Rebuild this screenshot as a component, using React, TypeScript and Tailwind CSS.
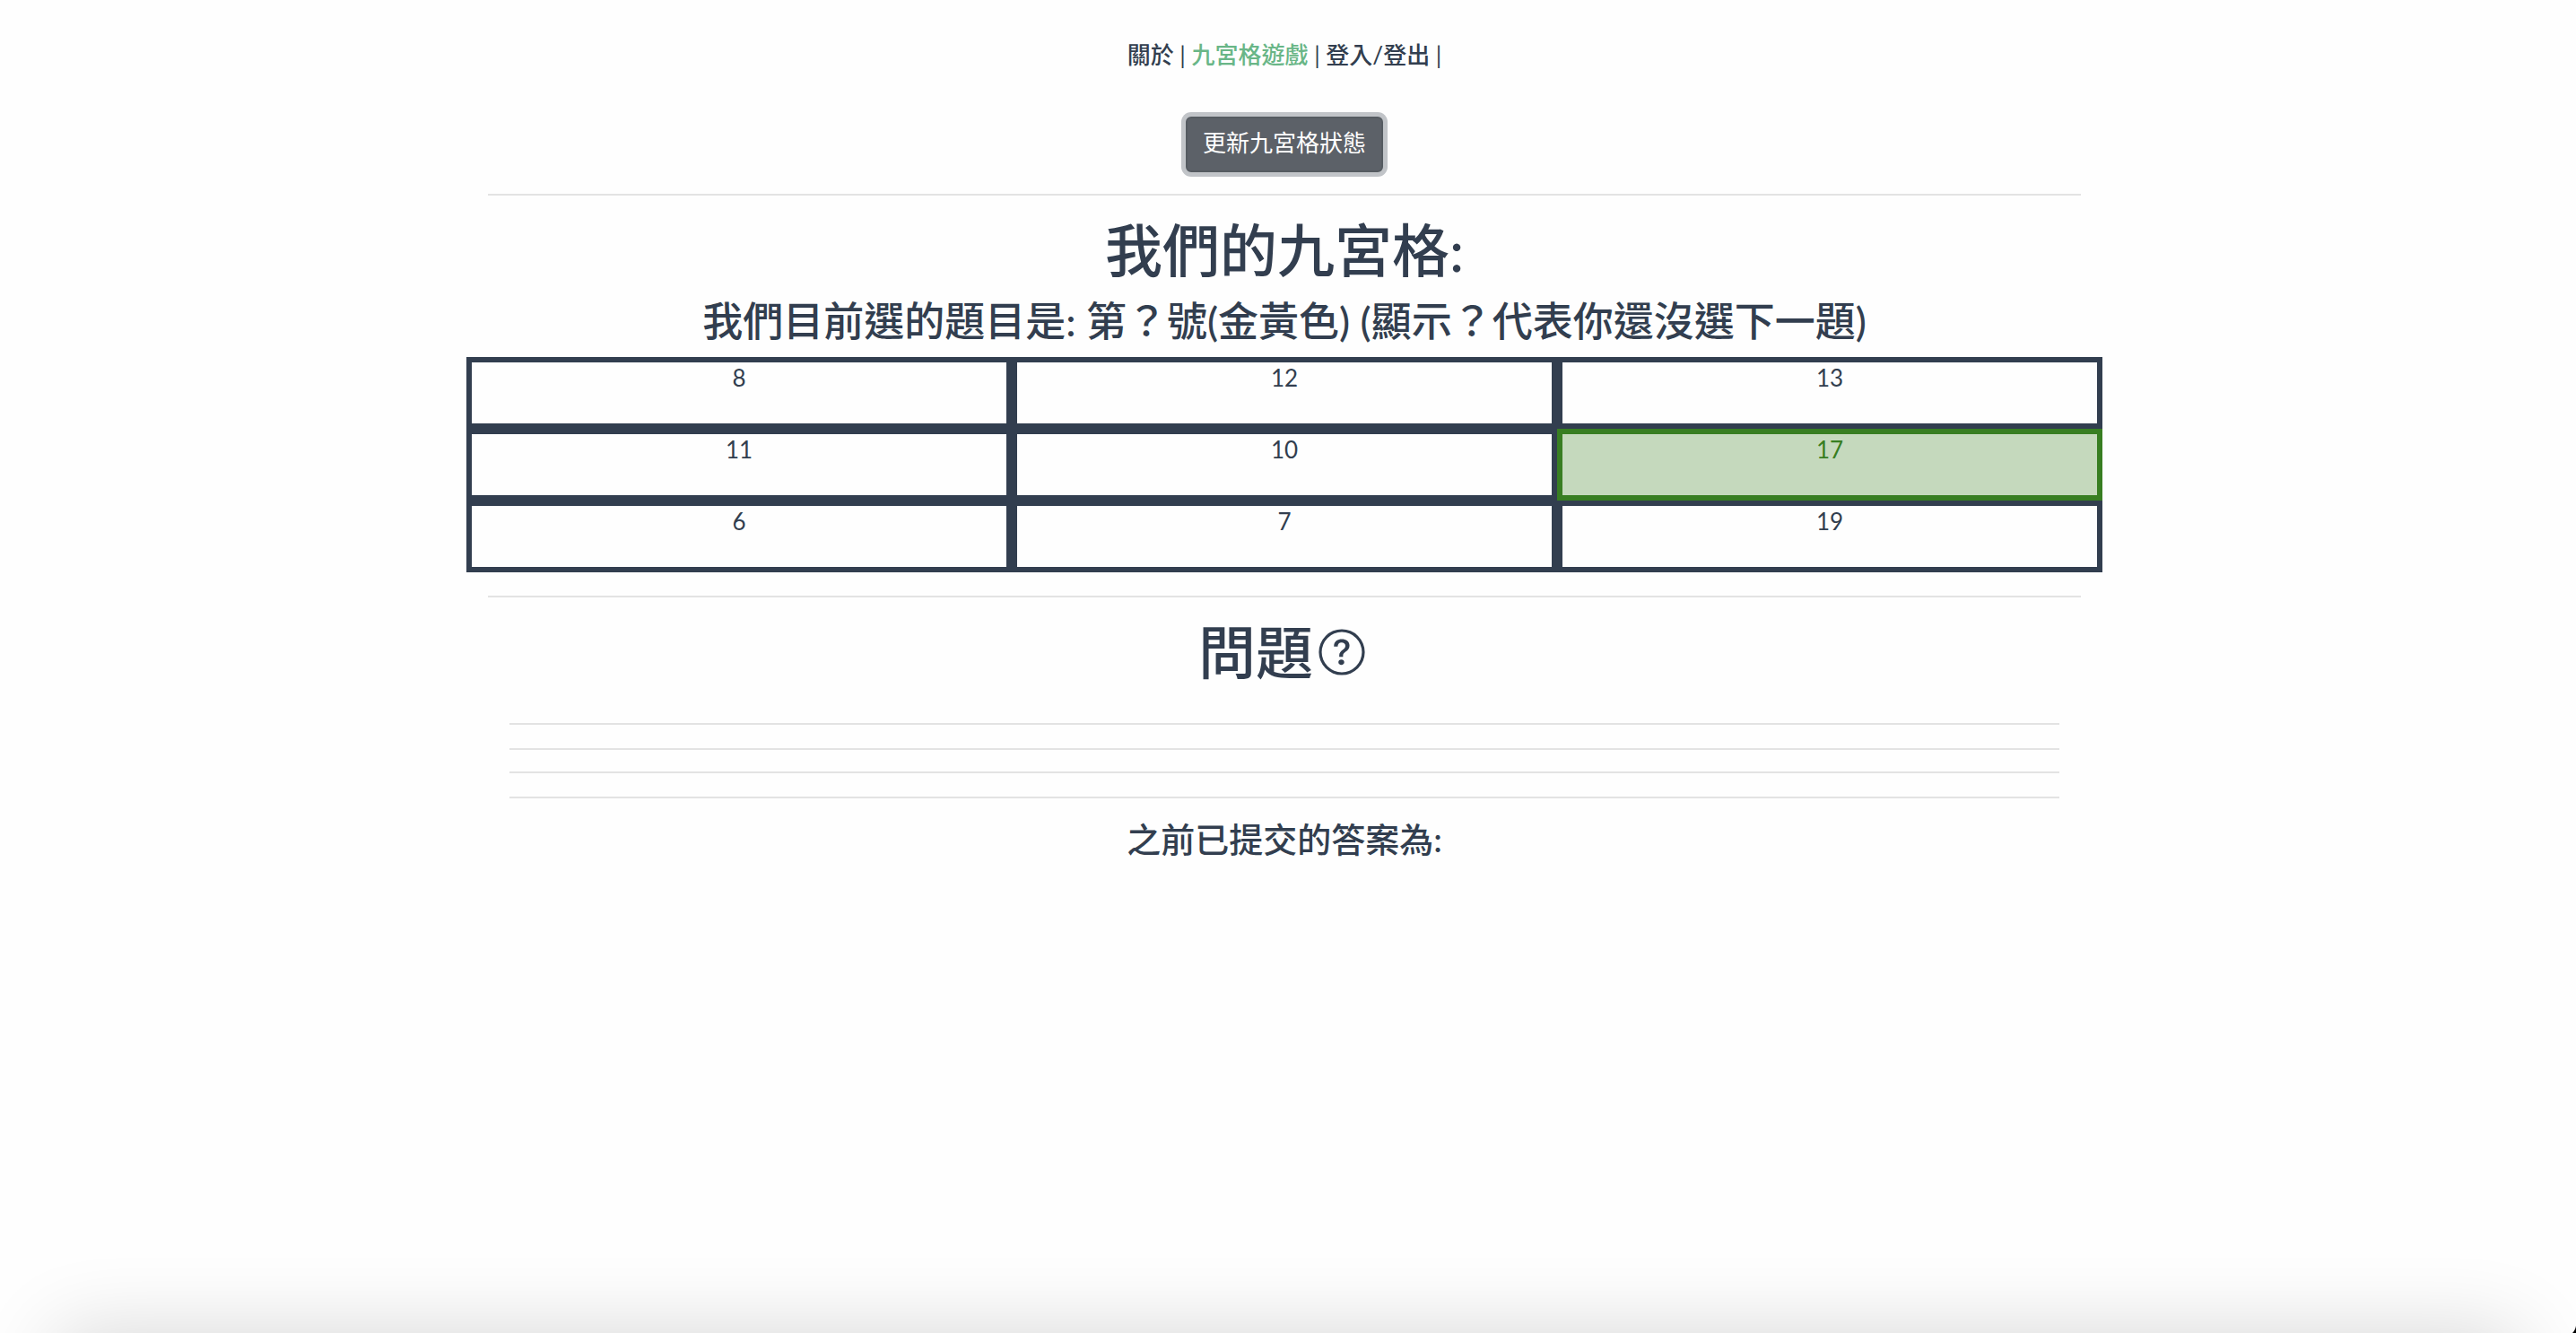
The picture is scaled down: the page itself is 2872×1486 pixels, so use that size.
const rows = [
  [8, 12, 13],
  [11, 10, 17],
  [6, 7, 19],
];

const solved = new Set([17]);

function Divider({ className }: { className: string }) {
  return <hr className={`border-0 h-[2px] bg-[#e3e3e3] ${className}`} />;
}

function QuestionIcon() {
  return (
    <svg viewBox="0 0 20 20" fill="currentColor" className="size-16" aria-hidden="true">
      <path
        fillRule="evenodd"
        d="M10 17a7 7 0 100-14 7 7 0 000 14zm8-7a8 8 0 11-16 0 8 8 0 0116 0z"
      />
      <path d="M7.25 8.033h1.32c0-.781.458-1.384 1.36-1.384.685 0 1.313.343 1.313 1.168 0 .635-.374.927-.965 1.371-.673.489-1.206 1.06-1.168 1.987l.007.463h1.307v-.355c0-.718.273-.927 1.01-1.486.609-.463 1.244-.977 1.244-2.056 0-1.511-1.276-2.241-2.673-2.241-1.326 0-2.786.647-2.754 2.533zm1.562 5.516c0 .533.425.927 1.01.927.609 0 1.028-.394 1.028-.927 0-.552-.42-.94-1.029-.94-.584 0-1.009.388-1.009.94z" />
    </svg>
  );
}

function Grid() {
  return (
    <table className="w-full table-fixed border-separate border-spacing-0">
      <tbody>
        {rows.map((row, i) => (
          <tr key={i}>
            {row.map((n) => (
              <td
                key={n}
                className={
                  solved.has(n)
                    ? "h-20 border-6 border-[#387e22] bg-[#c5d9bd] p-0 align-top leading-[34px] text-[#387e22]"
                    : "h-20 border-6 border-[#323e4f] p-0 align-top leading-[34px]"
                }
              >
                {n}
              </td>
            ))}
          </tr>
        ))}
      </tbody>
    </table>
  );
}

export default function App() {
  return (
    <div
      lang="zh-Hant"
      className="relative min-h-screen bg-[#fefefe] pr-2 text-center font-[Lato,'Noto_Sans_CJK_TC',sans-serif] text-[26px] text-[#323e4f]"
    >
      <nav className="pt-[42px] leading-[38px]">
        <a href="#about" className="font-medium">關於</a> |{" "}
        <a href="#game" className="font-medium text-[#69b687]">九宮格遊戲</a> |{" "}
        <a href="#login" className="font-medium">登入/登出</a> |
      </nav>

      <main className="mx-auto mt-[50px] w-full max-w-[1824px]">
        <button
          type="button"
          className="block mx-auto rounded-md border-2 border-[#555b61] bg-[#5c6168] px-[17px] pt-[7px] pb-[11px] leading-[40px] text-white ring-5 ring-[#c1c4c8]"
        >
          更新九宮格狀態
        </button>
        <Divider className="mx-6 mt-6" />
        <h1 className="mt-[22px] text-[64px] leading-[77px] font-medium">我們的九宮格:</h1>
        <h2 className="mt-[14px] mb-[13px] text-[45px] leading-[54px] font-medium">
          我們目前選的題目是: 第？號(金黃色) (顯示？代表你還沒選下一題)
        </h2>
        <Grid />
        <Divider className="mx-6 mt-[26px]" />

        <section>
          <h1 className="mt-[22px] flex items-center justify-center text-[64px] leading-[77px] font-medium">
            問題
            <QuestionIcon />
          </h1>
          <Divider className="mx-12 mt-[41px]" />
          <Divider className="mx-12 mt-[26px]" />
          <Divider className="mx-12 mt-6" />
          <Divider className="mx-12 mt-[26px]" />
          <h4 className="mt-[22px] text-[38px] leading-[46px] font-medium">之前已提交的答案為:</h4>
        </section>
      </main>

      <div className="pointer-events-none absolute inset-x-0 bottom-0 h-28 overflow-hidden">
        <div className="absolute inset-x-16 top-full h-64 shadow-[0_0_90px_rgba(0,0,0,0.16)]" />
        <svg viewBox="0 0 4 8" className="absolute right-0 bottom-0 h-2 w-1" aria-hidden="true">
          <path d="M4 0C3.500 3.500 2 6 0 8H4Z" fill="#000" />
        </svg>
      </div>
    </div>
  );
}
